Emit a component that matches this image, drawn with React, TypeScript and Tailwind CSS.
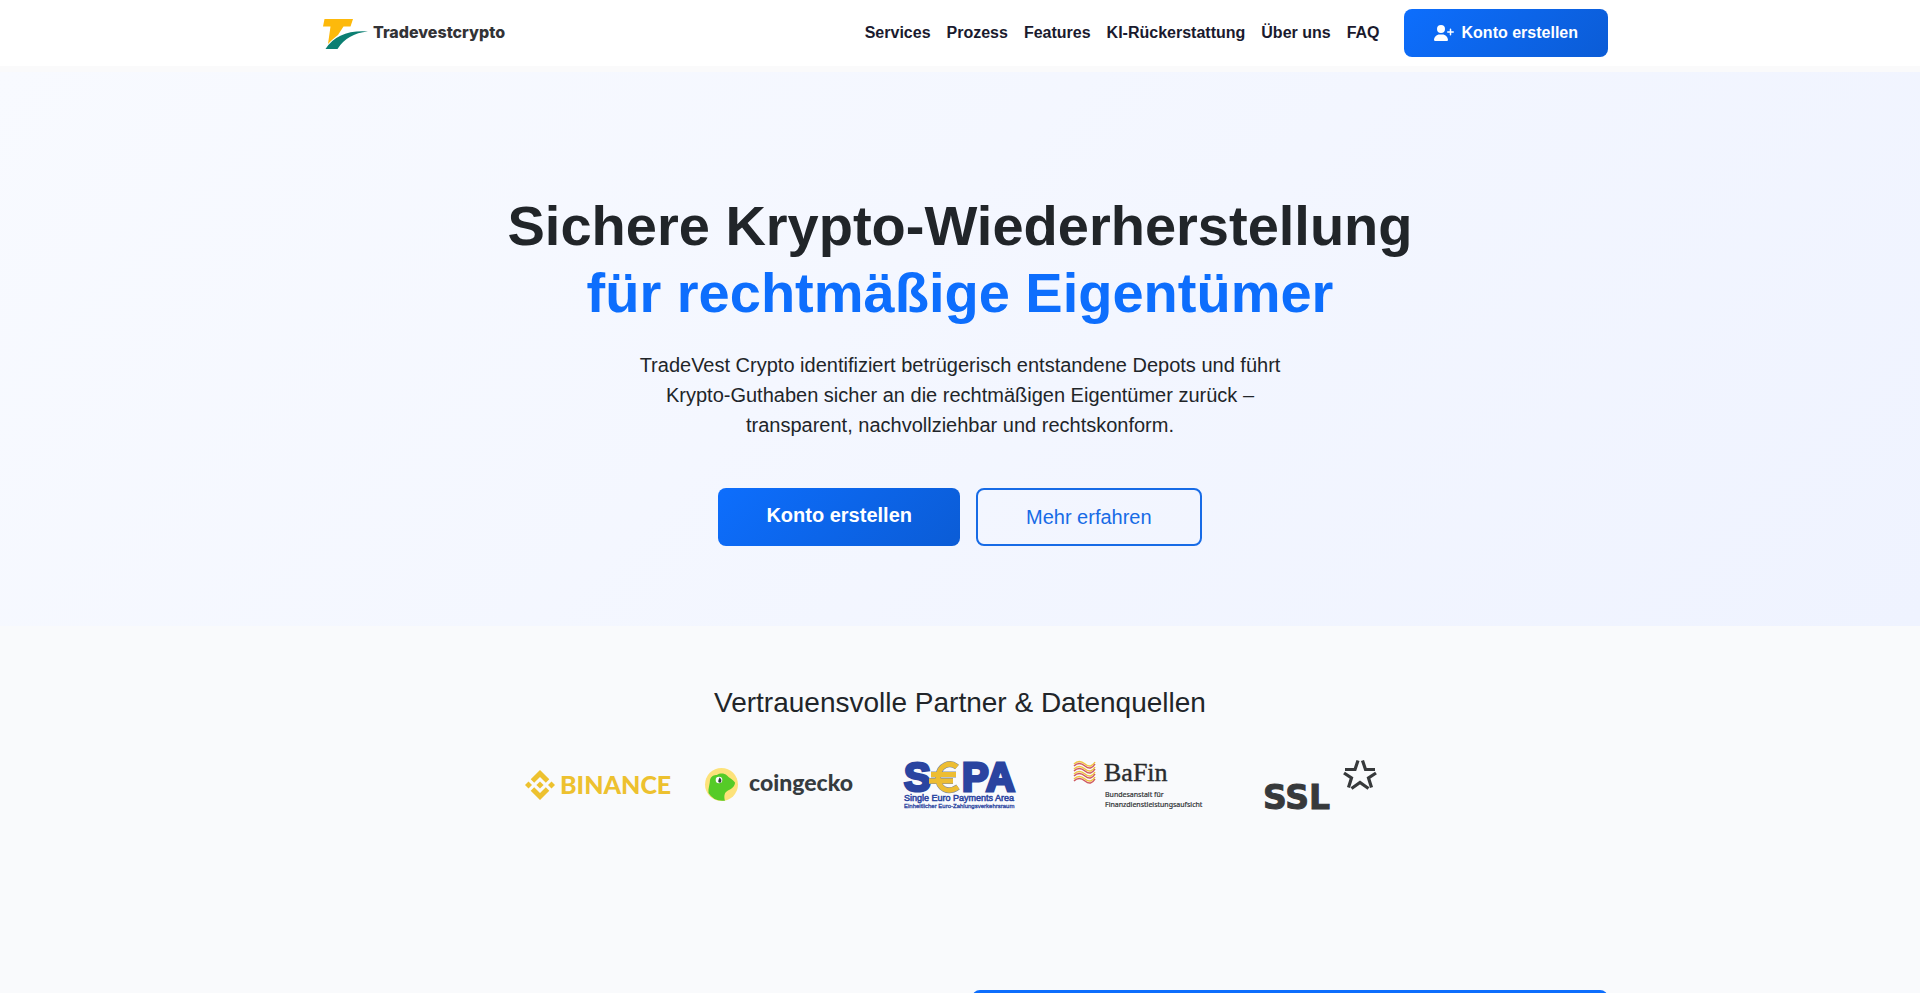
import { FaUserPlus } from "react-icons/fa6"

const navLinks = [
  { label: "Services", href: "#services" },
  { label: "Prozess", href: "#prozess" },
  { label: "Features", href: "#features" },
  { label: "KI-Rückerstattung", href: "#ki" },
  { label: "Über uns", href: "#about" },
  { label: "FAQ", href: "#faq" },
]

function BrandLogo() {
  return (
    <a href="#top" aria-label="Tradevestcrypto" className="block">
      <svg width="200" height="48" viewBox="0 0 200 48" className="overflow-visible">
        <path d="M12.500 10H41L38.500 17.500H31.500L26 26Q19 31.500 16 35L18.500 17.500H11Z" fill="#fdb90b" />
        <path d="M13.500 40Q26 20.500 56 22.500Q35 24.500 25.500 40Z" fill="#0c7f72" />
        <text x="61" y="29" fontFamily="Inter, sans-serif" fontSize="16" fontWeight="800" fill="#333336">
          Tradevestcrypto
        </text>
      </svg>
    </a>
  )
}

function Binance() {
  return (
    <svg width="150" height="50" viewBox="0 0 150 50" role="img" aria-label="Binance" className="overflow-visible">
      <g fill="#edc12f">
        <path d="M15 10L24.300 19.300L20.800 22.800L15 17L9.200 22.800L5.700 19.300Z" />
        <path d="M15 40L24.300 30.700L20.800 27.200L15 33L9.200 27.200L5.700 30.700Z" />
        <path d="M15 21.400L18.600 25L15 28.600L11.400 25Z" />
        <path d="M3.500 21.500L7 25L3.500 28.500L0 25Z" />
        <path d="M26.500 21.500L30 25L26.500 28.500L23 25Z" />
        <text x="35" y="34" fontFamily="Lato, sans-serif" fontSize="25" fontWeight="900">
          BINANCE
        </text>
      </g>
    </svg>
  )
}

function CoinGecko() {
  return (
    <svg width="150" height="50" viewBox="0 0 150 50" role="img" aria-label="coingecko" className="overflow-visible">
      <circle cx="16.500" cy="24.500" r="16.500" fill="#fde27a" />
      <path
        d="M3.500 33C3 28 5 24 5 20C6 16 9 15 12 15C15 13 19 13 22 15.500C24 18 28 19.500 30 22.500C30 26 27.500 28 25 29.500C22 31 20 32 19.500 35C19 38 20 40.700 20 40.700Q9 42 3.500 33Z"
        fill="#55cb27"
      />
      <circle cx="14" cy="20" r="3.300" fill="#fff" />
      <path d="M14.500 17.500Q17.800 20 15.500 22.700Q12.500 23 13.500 20Z" fill="#333b3d" />
      <text x="44" y="31" fontFamily="Lato, sans-serif" fontSize="23" fontWeight="900" fill="#363c3f">
        coingecko
      </text>
    </svg>
  )
}

function Sepa() {
  return (
    <svg width="116" height="50" viewBox="0 0 116 50" role="img" aria-label="SEPA" className="overflow-visible">
      <g fontFamily="Liberation Sans, sans-serif">
        <g fontSize="40" fontWeight="700" fill="#2a44a0" stroke="#2a44a0" strokeWidth="3">
          <text x="2" y="31">
            S
          </text>
          <text x="60" y="31">
            P
          </text>
          <text x="84" y="31">
            A
          </text>
        </g>
        <path
          d="M55 7C48 1 37 5 36 17C36 29 46 34 56 27M29 14.500H54M27 21H51"
          fill="none"
          stroke="#7886a4"
          strokeWidth="6"
        />
        <path
          d="M55 7C48 1 37 5 36 17C36 29 46 34 56 27M29 14.500H54M27 21H51"
          fill="none"
          stroke="#edbd32"
          strokeWidth="5"
        />
        <g fill="#2a44a0" stroke="#2a44a0">
          <text x="2" y="41" fontSize="9" strokeWidth="0.500">
            Single Euro Payments Area
          </text>
          <text x="2" y="48" fontSize="6" strokeWidth="0.300">
            Einheitlicher Euro-Zahlungsverkehrsraum
          </text>
        </g>
      </g>
    </svg>
  )
}

function BaFin() {
  return (
    <svg width="134" height="50" viewBox="0 0 134 50" role="img" aria-label="BaFin" className="overflow-visible">
      <g fill="none" strokeWidth="1.500">
        {[4, 9, 14, 19].map((y) => (
          <g key={y}>
            <path d={`M1 ${y}Q6 ${y - 5} 12 ${y}T22 ${y - 2}`} stroke="#f1c541" />
            <path d={`M1 ${y + 2}Q6 ${y - 3} 12 ${y + 2}T22 ${y}`} stroke="#cf5960" />
          </g>
        ))}
      </g>
      <text x="31" y="21" fontFamily="Liberation Serif, serif" fontSize="26" fill="#292b2d" stroke="#292b2d" strokeWidth="0.400">
        BaFin
      </text>
      <g fontFamily="Noto Sans, sans-serif" fontSize="7" fill="#303234" stroke="#303234" strokeWidth="0.200">
        <text x="32" y="37">
          Bundesanstalt für
        </text>
        <text x="32" y="47">
          Finanzdienstleistungsaufsicht
        </text>
      </g>
    </svg>
  )
}

function Ssl() {
  return (
    <svg width="114" height="50" viewBox="0 0 114 50" role="img" aria-label="SSL" className="overflow-visible">
      <text x="0" y="49" fontFamily="DejaVu Sans, sans-serif" fontSize="33" fontWeight="700" fill="#37393b" stroke="#37393b" strokeWidth="1">
        SSL
      </text>
      <g fill="none" stroke="#37393b" strokeWidth="3.200">
        <path d="M95 0.500L92 9.500H82" />
        <path d="M99.500 0.500L102.500 9.500H112" />
        <path d="M81 13L88.500 18L85.500 27.500" />
        <path d="M113 13L105.500 18L108.500 27.500" />
        <path d="M88.500 28.500L97 22.500L105.500 28.500" />
      </g>
    </svg>
  )
}

const partners = [Binance, CoinGecko, Sepa, BaFin, Ssl]

export default function App() {
  return (
    <div id="top" className="h-screen overflow-hidden bg-[#f9fafc] font-['Liberation_Sans',Arial,sans-serif] text-[#212529]">
      <header className="border-b-6 border-[#fafafb] bg-white">
        <div className="mx-auto flex h-[66px] max-w-[1320px] items-center justify-between px-3">
          <BrandLogo />
          <div className="flex items-center gap-6">
            <nav className="flex gap-4 font-bold text-[#1a1a2e]">
              {navLinks.map((link) => (
                <a key={link.href} href={link.href}>
                  {link.label}
                </a>
              ))}
            </nav>
            <button
              type="button"
              className="flex h-12 items-center gap-2 rounded-lg bg-linear-135 from-[#0d6efd] to-[#0b5cd6] px-[30px] font-bold text-white"
            >
              <FaUserPlus size={20} />
              Konto erstellen
            </button>
          </div>
        </div>
      </header>

      <section className="bg-linear-135 from-[#f8faff] to-[#eff3ff] px-3 pt-[120px] pb-20 text-center">
        <h1 className="text-[56px] leading-[67px] font-bold">
          Sichere Krypto-Wiederherstellung
          <br />
          <span className="text-[#0d6efd]">für rechtmäßige Eigentümer</span>
        </h1>
        <p className="mx-auto mt-6 max-w-[700px] text-xl leading-[30px]">
          TradeVest Crypto identifiziert betrügerisch entstandene Depots und führt Krypto-Guthaben sicher an die
          rechtmäßigen Eigentümer zurück – transparent, nachvollziehbar und rechtskonform.
        </p>
        <div className="mt-12 flex justify-center gap-4">
          <button
            type="button"
            className="h-[58px] rounded-lg bg-linear-135 from-[#0d6efd] to-[#0b5cd6] px-12 pb-1 text-xl font-bold text-white"
          >
            Konto erstellen
          </button>
          <button type="button" className="h-[58px] rounded-lg border-2 border-[#176be6] px-12 text-xl text-[#176be6]">
            Mehr erfahren
          </button>
        </div>
      </section>

      <section className="px-3 pt-[60px] text-center">
        <h2 className="text-[28px] leading-[34px]">Vertrauensvolle Partner &amp; Datenquellen</h2>
        <div className="mx-auto mt-10 grid max-w-[900px] grid-cols-5 justify-items-center">
          {partners.map((Logo, i) => (
            <Logo key={i} />
          ))}
        </div>
      </section>

      <section id="services" className="mx-auto mt-[180px] grid max-w-[1320px] grid-cols-2 gap-6 px-3">
        <div className="col-start-2 h-80 rounded-lg border-4 border-[#0d6efd] bg-white" />
      </section>
    </div>
  )
}
